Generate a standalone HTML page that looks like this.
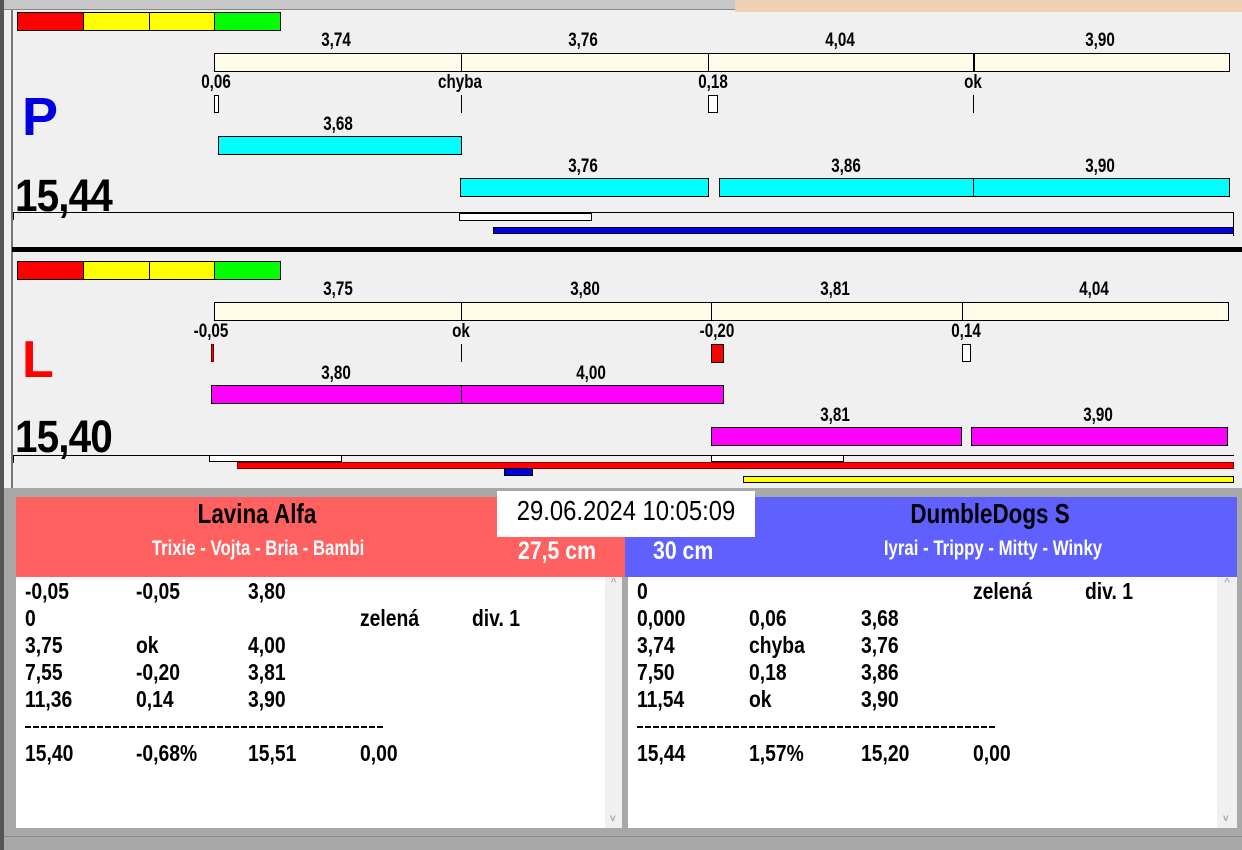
<!DOCTYPE html>
<html><head><meta charset="utf-8"><style>
*{margin:0;padding:0;box-sizing:border-box}
body{width:1242px;height:850px;overflow:hidden;background:#f0f0f0;position:relative;font-family:"Liberation Sans",sans-serif;font-weight:bold}
div{position:absolute}
.b{border:1px solid #000}
.t{font-size:19px;transform:translateX(-50%) scaleX(.8);white-space:nowrap;line-height:1}
.cream{background:#fffde8}
.cy{background:#00ffff}
.mg{background:#ff00ff}
.v{width:1px;background:#000}
.row{font-size:23px;line-height:27px;white-space:pre;transform:scaleX(.84);transform-origin:0 0}
.big{font-size:45px;line-height:1;transform:scaleX(.9);transform-origin:0 0;letter-spacing:-1px}
.dash{height:2px;background:repeating-linear-gradient(90deg,#000 0 6px,transparent 6px 8px)}
</style></head><body>
<div style="left:0;top:0;width:735px;height:10px;background:#c8c8c8;border-bottom:1px solid #888"></div>
<div style="left:735px;top:0;width:507px;height:12px;background:#f0d0b4"></div>
<div style="left:0;top:0;width:4px;height:850px;background:#555"></div>
<div style="left:11px;top:10px;width:2px;height:480px;background:#777"></div>

<div class="b" style="left:17px;top:12px;width:67px;height:19px;background:#f00"></div>
<div class="b" style="left:83px;top:12px;width:67px;height:19px;background:#ff0"></div>
<div class="b" style="left:149px;top:12px;width:66px;height:19px;background:#ff0"></div>
<div class="b" style="left:214px;top:12px;width:67px;height:19px;background:#0f0"></div>
<div class="t" style="left:336px;top:31px">3,74</div>
<div class="t" style="left:583px;top:31px">3,76</div>
<div class="t" style="left:840px;top:31px">4,04</div>
<div class="t" style="left:1100px;top:31px">3,90</div>
<div class="b cream" style="left:214px;top:53px;width:1016px;height:19px"></div>
<div class="v" style="left:461px;top:53px;height:19px"></div>
<div class="v" style="left:708px;top:53px;height:19px"></div>
<div class="v" style="left:973px;top:53px;height:19px;width:2px"></div>
<div class="t" style="left:216px;top:73px">0,06</div>
<div class="t" style="left:460px;top:73px">chyba</div>
<div class="t" style="left:713px;top:73px">0,18</div>
<div class="t" style="left:973px;top:73px">ok</div>
<div class="b" style="left:214px;top:95px;width:5px;height:18px;background:#fff"></div>
<div class="v" style="left:461px;top:95px;height:18px"></div>
<div class="b" style="left:708px;top:95px;width:10px;height:18px;background:#fff"></div>
<div class="v" style="left:973px;top:95px;height:18px"></div>
<div style="left:22px;top:90px;font-size:54px;color:#0000e0;line-height:1">P</div>
<div class="t" style="left:338px;top:115px">3,68</div>
<div class="b cy" style="left:218px;top:136px;width:244px;height:19px"></div>
<div class="t" style="left:583px;top:157px">3,76</div>
<div class="t" style="left:846px;top:157px">3,86</div>
<div class="t" style="left:1100px;top:157px">3,90</div>
<div class="b cy" style="left:460px;top:178px;width:249px;height:19px"></div>
<div class="b cy" style="left:719px;top:178px;width:511px;height:19px"></div>
<div class="v" style="left:973px;top:178px;height:19px"></div>
<div class="big" style="left:15px;top:173px">15,44</div>
<div style="left:13px;top:212px;width:1221px;height:1px;background:#000"></div>
<div class="v" style="left:1233px;top:212px;height:24px"></div>
<div class="v" style="left:13px;top:212px;height:8px"></div>
<div class="b" style="left:459px;top:213px;width:133px;height:8px;background:#fff"></div>
<div style="left:493px;top:227px;width:741px;height:7px;background:#0000e0;border:1px solid #000"></div>
<div style="left:12px;top:247px;width:1230px;height:5px;background:#000"></div>

<div class="b" style="left:17px;top:261px;width:67px;height:19px;background:#f00"></div>
<div class="b" style="left:83px;top:261px;width:67px;height:19px;background:#ff0"></div>
<div class="b" style="left:149px;top:261px;width:66px;height:19px;background:#ff0"></div>
<div class="b" style="left:214px;top:261px;width:67px;height:19px;background:#0f0"></div>
<div class="t" style="left:338px;top:280px">3,75</div>
<div class="t" style="left:585px;top:280px">3,80</div>
<div class="t" style="left:835px;top:280px">3,81</div>
<div class="t" style="left:1094px;top:280px">4,04</div>
<div class="b cream" style="left:214px;top:302px;width:1015px;height:19px"></div>
<div class="v" style="left:461px;top:302px;height:19px"></div>
<div class="v" style="left:711px;top:302px;height:19px"></div>
<div class="v" style="left:962px;top:302px;height:19px"></div>
<div class="t" style="left:211px;top:322px">-0,05</div>
<div class="t" style="left:461px;top:322px">ok</div>
<div class="t" style="left:717px;top:322px">-0,20</div>
<div class="t" style="left:966px;top:322px">0,14</div>
<div style="left:211px;top:344px;width:3px;height:18px;background:#f00;border:1px solid #600"></div>
<div class="v" style="left:461px;top:344px;height:18px"></div>
<div class="b" style="left:711px;top:344px;width:13px;height:19px;background:#f00"></div>
<div class="b" style="left:962px;top:344px;width:9px;height:18px;background:#fff"></div>
<div style="left:22px;top:334px;font-size:52px;color:#f00;line-height:1">L</div>
<div class="t" style="left:336px;top:364px">3,80</div>
<div class="t" style="left:591px;top:364px">4,00</div>
<div class="b mg" style="left:211px;top:385px;width:513px;height:19px"></div>
<div class="v" style="left:461px;top:385px;height:19px"></div>
<div class="t" style="left:835px;top:406px">3,81</div>
<div class="t" style="left:1098px;top:406px">3,90</div>
<div class="b mg" style="left:711px;top:427px;width:251px;height:19px"></div>
<div class="b mg" style="left:971px;top:427px;width:257px;height:19px"></div>
<div class="big" style="left:15px;top:414px">15,40</div>
<div style="left:13px;top:455px;width:1221px;height:1px;background:#000"></div>
<div class="v" style="left:13px;top:455px;height:8px"></div>
<div class="b" style="left:209px;top:455px;width:133px;height:7px;background:#fff"></div>
<div class="b" style="left:711px;top:455px;width:133px;height:7px;background:#fff"></div>
<div style="left:237px;top:462px;width:997px;height:7px;background:#f00;border:1px solid #800"></div>
<div class="b" style="left:504px;top:468px;width:29px;height:8px;background:#0000e0"></div>
<div style="left:743px;top:476px;width:491px;height:7px;background:#ff0;border:1px solid #000"></div>

<div style="left:4px;top:488px;width:1238px;height:362px;background:#a8a8a8"></div>
<div style="left:16px;top:497px;width:610px;height:80px;background:#ff6060"></div>
<div style="left:625px;top:497px;width:612px;height:80px;background:#6060ff"></div>
<div style="left:497px;top:491px;width:258px;height:46px;background:#fff"></div>
<div style="left:626px;top:497px;font-weight:normal;font-size:28px;line-height:1;transform:translateX(-50%) scaleX(.85);white-space:nowrap">29.06.2024 10:05:09</div>
<div class="t" style="left:257px;top:500px;font-size:28px">Lavina Alfa</div>
<div class="t" style="left:258px;top:538px;font-size:21px;color:#fff">Trixie - Vojta - Bria - Bambi</div>
<div style="left:518px;top:539px;font-size:25px;color:#fff;line-height:1;transform:scaleX(.85);transform-origin:0 0;white-space:nowrap">27,5 cm</div>
<div class="t" style="left:990px;top:500px;font-size:28px">DumbleDogs S</div>
<div class="t" style="left:993px;top:538px;font-size:21px;color:#fff">Iyrai - Trippy - Mitty - Winky</div>
<div style="left:653px;top:539px;font-size:25px;color:#fff;line-height:1;transform:scaleX(.85);transform-origin:0 0;white-space:nowrap">30 cm</div>

<div style="left:16px;top:577px;width:590px;height:251px;background:#fff"></div>
<div style="left:605px;top:577px;width:17px;height:251px;background:#f0f0f0;color:#aaa;font-size:10px;text-align:center">^<div style="left:5px;top:236px">v</div></div>
<div style="left:628px;top:577px;width:590px;height:251px;background:#fff"></div>
<div style="left:1217px;top:577px;width:20px;height:251px;background:#f0f0f0;color:#aaa;font-size:10px;text-align:center">^<div style="left:6px;top:236px">v</div></div>

<div style="left:25px;top:578px">
<div class="row" style="left:0;top:0">-0,05</div><div class="row" style="left:111px;top:0">-0,05</div><div class="row" style="left:223px;top:0">3,80</div>
<div class="row" style="left:0;top:27px">0</div><div class="row" style="left:335px;top:27px">zelená</div><div class="row" style="left:447px;top:27px">div. 1</div>
<div class="row" style="left:0;top:54px">3,75</div><div class="row" style="left:111px;top:54px">ok</div><div class="row" style="left:223px;top:54px">4,00</div>
<div class="row" style="left:0;top:81px">7,55</div><div class="row" style="left:111px;top:81px">-0,20</div><div class="row" style="left:223px;top:81px">3,81</div>
<div class="row" style="left:0;top:108px">11,36</div><div class="row" style="left:111px;top:108px">0,14</div><div class="row" style="left:223px;top:108px">3,90</div>
<div class="dash" style="left:0;top:148px;width:360px"></div>
<div class="row" style="left:0;top:162px">15,40</div><div class="row" style="left:111px;top:162px">-0,68%</div><div class="row" style="left:223px;top:162px">15,51</div><div class="row" style="left:335px;top:162px">0,00</div>
</div>

<div style="left:637px;top:578px">
<div class="row" style="left:0;top:0">0</div><div class="row" style="left:336px;top:0">zelená</div><div class="row" style="left:448px;top:0">div. 1</div>
<div class="row" style="left:0;top:27px">0,000</div><div class="row" style="left:112px;top:27px">0,06</div><div class="row" style="left:224px;top:27px">3,68</div>
<div class="row" style="left:0;top:54px">3,74</div><div class="row" style="left:112px;top:54px">chyba</div><div class="row" style="left:224px;top:54px">3,76</div>
<div class="row" style="left:0;top:81px">7,50</div><div class="row" style="left:112px;top:81px">0,18</div><div class="row" style="left:224px;top:81px">3,86</div>
<div class="row" style="left:0;top:108px">11,54</div><div class="row" style="left:112px;top:108px">ok</div><div class="row" style="left:224px;top:108px">3,90</div>
<div class="dash" style="left:0;top:148px;width:360px"></div>
<div class="row" style="left:0;top:162px">15,44</div><div class="row" style="left:112px;top:162px">1,57%</div><div class="row" style="left:224px;top:162px">15,20</div><div class="row" style="left:336px;top:162px">0,00</div>
</div>
<div style="left:4px;top:836px;width:1238px;height:1px;background:#888"></div>
</body></html>
